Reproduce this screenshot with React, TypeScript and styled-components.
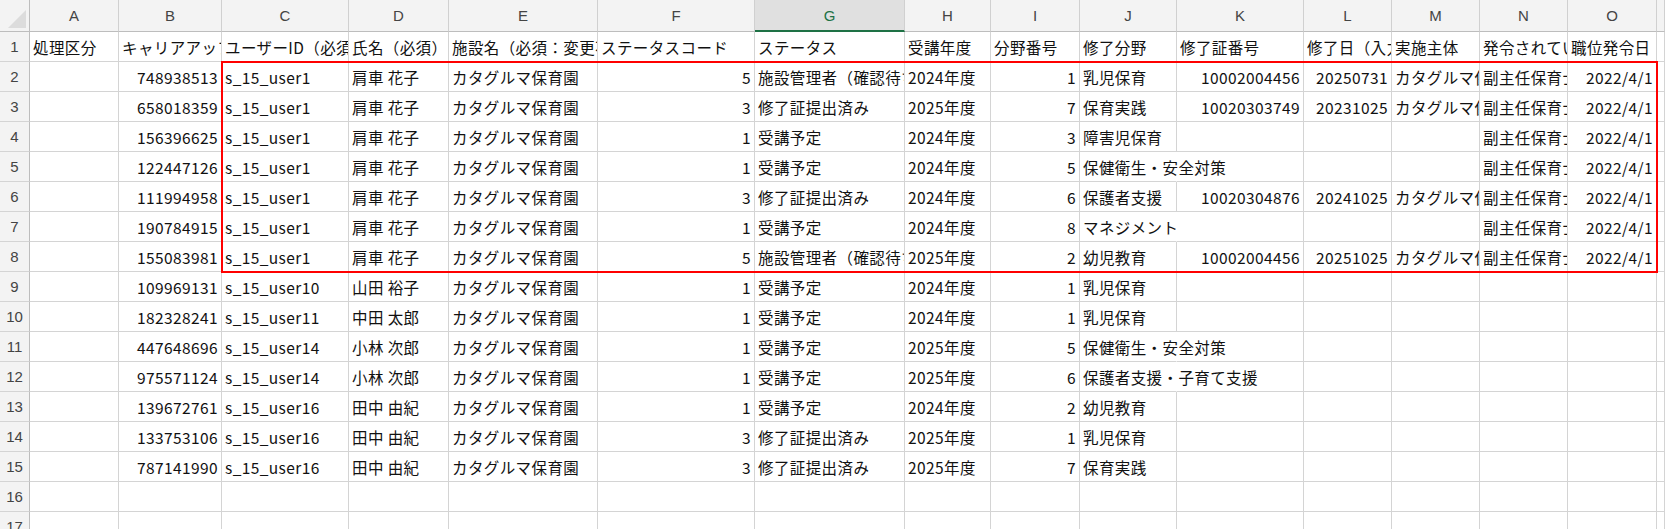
import React from "react";
import styled, { createGlobalStyle } from "styled-components";

const Global = createGlobalStyle`
  html, body { margin: 0; padding: 0; background: #fff; overflow: hidden; }
  body { font-family: "Noto Sans CJK JP", "Noto Sans", sans-serif; }
`;

const COLS = [30, 89, 103, 127, 100, 149, 157, 150, 86, 89, 97, 127, 88, 88, 88, 89, 8];
const LETTERS = ["A", "B", "C", "D", "E", "F", "G", "H", "I", "J", "K", "L", "M", "N", "O", ""];

const Sheet = styled.div`
  position: relative;
  display: grid;
  grid-template-columns: ${COLS.map((c) => c + "px").join(" ")};
  grid-auto-rows: 30px;
  grid-template-rows: 32px;
  width: 1666px;
`;

const Corner = styled.div`
  background: #f3f3f3;
  border-right: 1px solid #bdbdbd;
  border-bottom: 1px solid #bdbdbd;
  position: relative;
  &::after {
    content: "";
    position: absolute;
    right: 3px;
    bottom: 3px;
    border-left: 18px solid transparent;
    border-bottom: 18px solid #dcdcdc;
  }
`;

const ColHead = styled.div<{ $sel?: boolean }>`
  background: ${(p) => (p.$sel ? "#e0e0e0" : "#f3f3f3")};
  color: ${(p) => (p.$sel ? "#1e7145" : "#444")};
  border-right: 1px solid #d0d0d0;
  border-bottom: ${(p) => (p.$sel ? "2px solid #1e7145" : "1px solid #bdbdbd")};
  font-family: "Liberation Sans", Arial, sans-serif;
  font-size: 15px;
  display: flex;
  align-items: center;
  justify-content: center;
`;

const RowHead = styled.div`
  background: #f3f3f3;
  color: #444;
  border-right: 1px solid #bdbdbd;
  border-bottom: 1px solid #d4d4d4;
  font-family: "Liberation Sans", Arial, sans-serif;
  font-size: 15px;
  display: flex;
  align-items: center;
  justify-content: center;
`;

const Cell = styled.div<{ $right?: boolean; $spill?: boolean }>`
  border-right: 1px solid ${(p) => (p.$spill ? "transparent" : "#d4d4d4")};
  border-bottom: 1px solid #d4d4d4;
  font-size: 15.5px;
  letter-spacing: 0.4px;
  color: #111;
  line-height: 30px;
  white-space: nowrap;
  overflow: ${(p) => (p.$spill ? "visible" : "hidden")};
  text-align: ${(p) => (p.$right ? "right" : "left")};
  padding: 0 3px;
  position: relative;
  z-index: ${(p) => (p.$spill ? 1 : 0)};
`;

const Highlight = styled.div`
  position: absolute;
  left: 221px;
  top: 61px;
  width: 1437px;
  height: 212px;
  border: 2px solid #f00;
  box-sizing: border-box;
  pointer-events: none;
  z-index: 3;
`;

// B, F, I, K, L, O hold numbers and sit on the right
const RIGHT = new Set([1, 5, 8, 10, 11, 14]);

const header = ["処理区分", "キャリアアップ研修ID", "ユーザーID（必須）", "氏名（必須）", "施設名（必須：変更不可）", "ステータスコード", "ステータス", "受講年度", "分野番号", "修了分野", "修了証番号", "修了日（入力）", "実施主体", "発令されている職位", "職位発令日"];

const u1 = (id: string, code: string, st: string, yr: string, no: string, f: string, k = "", l = "", m = ""): string[] =>
  ["", id, "s_15_user1", "肩車 花子", "カタグルマ保育園", code, st, yr, no, f, k, l, m, "副主任保育士", "2022/4/1"];
const other = (id: string, u: string, n: string, code: string, st: string, yr: string, no: string, f: string): string[] =>
  ["", id, u, n, "カタグルマ保育園", code, st, yr, no, f, "", "", "", "", ""];

const rows: string[][] = [
  header,
  u1("748938513", "5", "施設管理者（確認待ち）", "2024年度", "1", "乳児保育", "10002004456", "20250731", "カタグルマ保育園"),
  u1("658018359", "3", "修了証提出済み", "2025年度", "7", "保育実践", "10020303749", "20231025", "カタグルマ保育園"),
  u1("156396625", "1", "受講予定", "2024年度", "3", "障害児保育"),
  u1("122447126", "1", "受講予定", "2024年度", "5", "保健衛生・安全対策"),
  u1("111994958", "3", "修了証提出済み", "2024年度", "6", "保護者支援", "10020304876", "20241025", "カタグルマ保育園"),
  u1("190784915", "1", "受講予定", "2024年度", "8", "マネジメント"),
  u1("155083981", "5", "施設管理者（確認待ち）", "2025年度", "2", "幼児教育", "10002004456", "20251025", "カタグルマ保育園"),
  other("109969131", "s_15_user10", "山田 裕子", "1", "受講予定", "2024年度", "1", "乳児保育"),
  other("182328241", "s_15_user11", "中田 太郎", "1", "受講予定", "2024年度", "1", "乳児保育"),
  other("447648696", "s_15_user14", "小林 次郎", "1", "受講予定", "2025年度", "5", "保健衛生・安全対策"),
  other("975571124", "s_15_user14", "小林 次郎", "1", "受講予定", "2025年度", "6", "保護者支援・子育て支援"),
  other("139672761", "s_15_user16", "田中 由紀", "1", "受講予定", "2024年度", "2", "幼児教育"),
  other("133753106", "s_15_user16", "田中 由紀", "3", "修了証提出済み", "2025年度", "1", "乳児保育"),
  other("787141990", "s_15_user16", "田中 由紀", "3", "修了証提出済み", "2025年度", "7", "保育実践"),
  Array(15).fill(""),
  Array(15).fill(""),
];

export default function App() {
  return (
    <>
      <Global />
      <Sheet>
        <Corner />
        {LETTERS.map((l, i) => (
          <ColHead key={i} $sel={l === "G"}>{l}</ColHead>
        ))}
        {rows.map((r, ri) => (
          <React.Fragment key={ri}>
            <RowHead>{ri + 1}</RowHead>
            {r.map((v, ci) => {
              const spill = ci === 9 && ri > 0 && v.length > 5 && r[10] === "";
              return (
                <Cell key={ci} $right={ri > 0 && RIGHT.has(ci)} $spill={spill}>
                  {v}
                </Cell>
              );
            })}
            <Cell />
          </React.Fragment>
        ))}
        <Highlight />
      </Sheet>
    </>
  );
}
